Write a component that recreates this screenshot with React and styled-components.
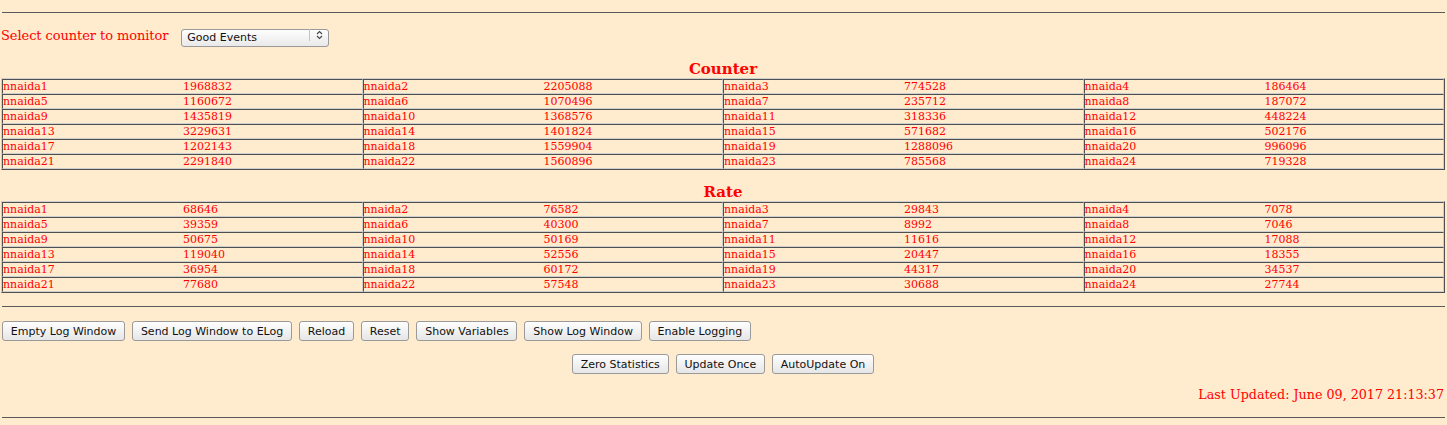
import React from 'react';
import styled, { createGlobalStyle } from 'styled-components';

const GlobalStyle = createGlobalStyle`
  html, body {
    margin: 0;
    padding: 0;
    background: #ffebcd;
  }
  body {
    font-family: 'DejaVu Serif', 'Liberation Serif', serif;
  }
`;

const counters = [
  1968832, 2205088, 774528, 186464,
  1160672, 1070496, 235712, 187072,
  1435819, 1368576, 318336, 448224,
  3229631, 1401824, 571682, 502176,
  1202143, 1559904, 1288096, 996096,
  2291840, 1560896, 785568, 719328,
];

const rates = [
  68646, 76582, 29843, 7078,
  39359, 40300, 8992, 7046,
  50675, 50169, 11616, 17088,
  119040, 52556, 20447, 18355,
  36954, 60172, 44317, 34537,
  77680, 57548, 30688, 27744,
];

const Page = styled.div`
  padding: 0 2px 0 1px;
  color: #ff0000;
`;

const Rule = styled.hr`
  margin: ${(p) => p.$top || 0}px 0 0 1px;
  border: 0;
  border-top: 1px solid #5a5a5a;
  height: 0;
`;

const SelectRow = styled.div`
  display: flex;
  align-items: center;
  column-gap: 13px;
  margin-top: 13px;
  height: 18px;
`;

const Label = styled.span`
  font-size: 13px;
  letter-spacing: -0.08px;
  margin-top: 1px;
`;

const SelectWrap = styled.div`
  position: relative;
  width: 148px;
  height: 18px;
`;

const Select = styled.select`
  appearance: none;
  width: 100%;
  height: 100%;
  margin: 0;
  padding: 0 0 0 5px;
  font-family: 'DejaVu Sans', sans-serif;
  font-size: 11px;
  color: #111;
  border: 1px solid #9a9a9a;
  border-radius: 3px;
  background: linear-gradient(#fefefe, #e9e9e9);
`;

const Arrow = styled.span`
  position: absolute;
  top: 3px;
  right: 0;
  width: 19px;
  height: 12px;
  border-left: 1px solid #c4c4c4;
  display: flex;
  align-items: center;
  justify-content: center;
  pointer-events: none;
`;

const Heading = styled.h3`
  margin: ${(p) => p.$top}px 0 0;
  font-size: 15px;
  line-height: 16px;
  font-weight: bold;
  text-align: center;
  color: #ff0000;
`;

const Table = styled.div`
  display: grid;
  grid-template-columns: repeat(4, 1fr);
  margin-top: 1px;
  border-top: 1px solid #cfcfcf;
  border-left: 1px solid #cfcfcf;
  border-bottom: 1px solid #4f4f4f;
  border-right: 1px solid #4f4f4f;
`;

const Cell = styled.div`
  display: flex;
  font-size: 11px;
  line-height: 13px;
  border-top: 1px solid #4f4f4f;
  border-left: 1px solid #4f4f4f;
  border-bottom: 1px solid #cfcfcf;
  border-right: 1px solid #cfcfcf;
  white-space: nowrap;
`;

const Name = styled.span`
  width: 180px;
  flex: none;
`;

const ButtonRow = styled.div`
  display: flex;
  justify-content: ${(p) => p.$center ? 'center' : 'flex-start'};
  column-gap: 7px;
  margin-top: ${(p) => p.$top}px;
  padding-left: ${(p) => p.$center ? 0 : 1}px;
`;

const Button = styled.button`
  height: 20px;
  margin: 0;
  padding: 0 7.8px;
  font-family: 'DejaVu Sans', sans-serif;
  font-size: 11px;
  color: #111;
  border: 1px solid #9a9a9a;
  border-radius: 3px;
  background: linear-gradient(#fefefe, #e6e6e6);
`;

const Updated = styled.div`
  margin-top: 13px;
  text-align: right;
  font-size: 12.7px;
  line-height: 16px;
  padding-right: 1px;
`;

const StatsTable = ({ values }) => (
  <Table>
    {values.map((v, i) => (
      <Cell key={i}>
        <Name>nnaida{i + 1}</Name>
        <span>{v}</span>
      </Cell>
    ))}
  </Table>
);

const App = () => {
  return (
    <Page>
      <GlobalStyle />
      <Rule $top={12} />
      <SelectRow>
        <Label>Select counter to monitor</Label>
        <SelectWrap>
          <Select defaultValue='good'>
            <option value='good'>Good Events</option>
            <option value='bad'>Bad Events</option>
          </Select>
          <Arrow>
            <svg width='7' height='10' viewBox='0 0 7 10' fill='none' stroke='#444' strokeWidth='1.1'>
              <path d='M1 4 L3.5 1.5 L6 4' />
              <path d='M1 6 L3.5 8.5 L6 6' />
            </svg>
          </Arrow>
        </SelectWrap>
      </SelectRow>
      <Heading $top={17}>Counter</Heading>
      <StatsTable values={counters} />
      <Heading $top={14}>Rate</Heading>
      <StatsTable values={rates} />
      <Rule $top={13} />
      <ButtonRow $top={14}>
        <Button>Empty Log Window</Button>
        <Button>Send Log Window to ELog</Button>
        <Button>Reload</Button>
        <Button>Reset</Button>
        <Button>Show Variables</Button>
        <Button>Show Log Window</Button>
        <Button>Enable Logging</Button>
      </ButtonRow>
      <ButtonRow $center $top={13}>
        <Button>Zero Statistics</Button>
        <Button>Update Once</Button>
        <Button>AutoUpdate On</Button>
      </ButtonRow>
      <Updated>Last Updated: June 09, 2017 21:13:37</Updated>
      <Rule $top={14} />
    </Page>
  );
};

export default App;
